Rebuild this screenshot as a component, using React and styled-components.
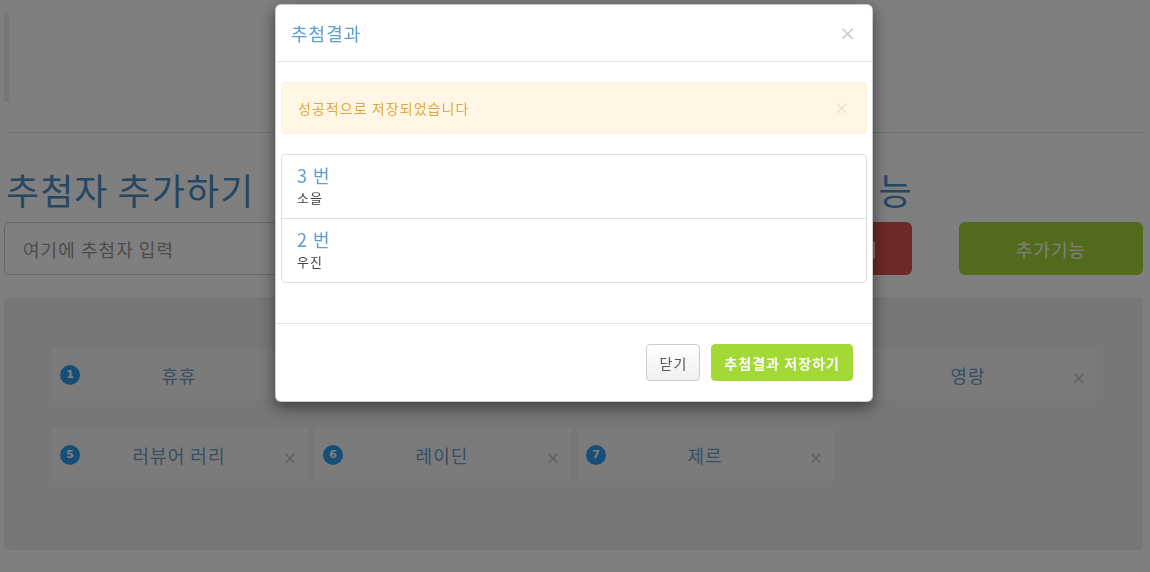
import React from "react";
import styled, { createGlobalStyle } from "styled-components";

const Global = createGlobalStyle`
  html, body { margin: 0; padding: 0; background: #fff; }
  body {
    font-family: "Noto Sans CJK KR", "Noto Sans", sans-serif;
    font-size: 14px;
    letter-spacing: 0.075em;
    color: #333;
    overflow: hidden;
  }
  * { box-sizing: border-box; }
  input, button { letter-spacing: inherit; }
`;

const Page = styled.div`
  padding: 0 7px 0 4px;
  height: 572px;
`;

const Quote = styled.div`
  margin-top: 13px;
  height: 89px;
  border-left: 5px solid #eee;
`;

const Rule = styled.hr`
  margin: 30px 0 0 4px;
  border: 0;
  border-top: 1px solid #e2e2e2;
`;

const Grid = styled.div`
  display: grid;
  grid-template-columns: 1fr 177px 184px;
  column-gap: 8px;
  margin-top: ${(p) => p.$top}px;
`;

const Heading = styled.h1`
  margin: 0 0 0 2px;
  font-size: 36px;
  line-height: 40px;
  font-weight: 400;
  color: #4a8fc6;
  white-space: nowrap;
`;

const Input = styled.input`
  height: 53px;
  border: 1px solid #ccc;
  border-radius: 6px;
  padding: 0 18px;
  font-family: inherit;
  font-size: 18px;
  color: #555;
  &::placeholder { color: #999; }
`;

const Btn = styled.button`
  height: 53px;
  width: ${(p) => p.$w || "100%"};
  border: 0;
  border-radius: 6px;
  background: ${(p) => p.$bg};
  color: #fff;
  font-family: inherit;
  font-size: 18px;
`;

const Panel = styled.div`
  margin-top: 22px;
  height: 253px;
  background: #efefef;
  border-radius: 5px;
  padding: 50px 46px 0 46px;
  display: grid;
  grid-template-columns: repeat(4, 259px);
  grid-auto-rows: 55px;
  column-gap: 4px;
  row-gap: 25px;
  align-content: start;
`;

const Card = styled.div`
  background: #f7f7f7;
  border: 1px solid #eaeaea;
  display: grid;
  grid-template-columns: 40px 1fr 40px;
  align-items: center;
  padding: 0 10px 0 9px;
`;

const Badge = styled.span`
  width: 20px;
  height: 20px;
  border-radius: 50%;
  background: #2a9ef0;
  color: #fff;
  font-family: "DejaVu Sans", sans-serif;
  letter-spacing: 0;
  font-weight: 700;
  font-size: 11px;
  display: flex;
  align-items: center;
  justify-content: center;
`;

const CardName = styled.span`
  text-align: center;
  font-size: 18px;
  line-height: 24px;
  color: #6e9cc8;
`;

const CardClose = styled.span`
  justify-self: end;
  margin-top: 8px;
  font-family: "DejaVu Sans", sans-serif;
  font-size: 17px;
  line-height: 1;
  color: #c4c4c4;
`;

const Backdrop = styled.div`
  position: fixed;
  inset: 0;
  background: rgba(0, 0, 0, 0.5);
`;

const Dialog = styled.div`
  position: fixed;
  top: 4px;
  left: 275px;
  width: 598px;
  background: #fff;
  border: 1px solid rgba(0, 0, 0, 0.2);
  border-radius: 6px;
  box-shadow: 0 5px 15px rgba(0, 0, 0, 0.5);
`;

const Header = styled.div`
  display: flex;
  align-items: center;
  justify-content: space-between;
  padding: 15px;
  border-bottom: 1px solid #e5e5e5;
`;

const Title = styled.h4`
  margin: 0;
  font-size: 18px;
  line-height: 26px;
  font-weight: 400;
  color: #5a9fd2;
`;

const Close = styled.span`
  font-family: "DejaVu Sans", sans-serif;
  letter-spacing: 0;
  font-size: ${(p) => p.$size || 18}px;
  line-height: 1;
  color: ${(p) => p.$color || "#cdcdcd"};
  margin-right: ${(p) => p.$mr || 0}px;
`;

const Body = styled.div`
  padding: 20px 5px;
`;

const Alert = styled.div`
  display: flex;
  align-items: center;
  justify-content: space-between;
  padding: 15px 16px;
  background: #fff6e5;
  border: 1px solid #fbefd6;
  border-radius: 4px;
  color: #dea73e;
  font-size: 14px;
  line-height: 20px;
  margin-bottom: 20px;
`;

const List = styled.div`
  border: 1px solid #ddd;
  border-radius: 4px;
  overflow: hidden;
  margin-bottom: 20px;
`;

const Item = styled.div`
  padding: 10px 15px;
  & + & { border-top: 1px solid #ddd; }
`;

const ItemHead = styled.div`
  font-size: 18px;
  line-height: 20px;
  color: #5a9fd2;
  margin-bottom: 3px;
`;

const ItemText = styled.div`
  font-size: 13px;
  line-height: 20px;
  color: #444;
`;

const Footer = styled.div`
  display: flex;
  justify-content: flex-end;
  gap: 11px;
  padding: 20px 19px 20px 20px;
  border-top: 1px solid #e5e5e5;
`;

const FootBtn = styled.button`
  height: 37px;
  padding: 0 12px;
  border-radius: 4px;
  font-family: inherit;
  font-size: 14px;
  border: 1px solid ${(p) => (p.$primary ? "#a3d937" : "#ccc")};
  background: ${(p) => (p.$primary ? "#a3d937" : "linear-gradient(#fff, #f0f0f0)")};
  color: ${(p) => (p.$primary ? "#fff" : "#555")};
  font-weight: ${(p) => (p.$primary ? 700 : 400)};
`;

const cards = [
  [1, "휴휴"],
  [2, "우진"],
  [3, "소을"],
  [4, "영랑"],
  [5, "러뷰어 러리"],
  [6, "레이딘"],
  [7, "제르"],
];

export default function App() {
  return (
    <>
      <Global />
      <Page>
        <Quote />
        <Rule />
        <Grid $top={36}>
          <Heading>추첨자 추가하기</Heading>
          <Heading>추첨기능</Heading>
        </Grid>
        <Grid $top={13}>
          <Input placeholder="여기에 추첨자 입력" />
          <Btn $bg="#d9534f" $w="138px">추첨하기</Btn>
          <Btn $bg="#a3d63b">추가기능</Btn>
        </Grid>
        <Panel>
          {cards.map(([n, name]) => (
            <Card key={n}>
              <Badge>{n}</Badge>
              <CardName>{name}</CardName>
              <CardClose>×</CardClose>
            </Card>
          ))}
        </Panel>
      </Page>
      <Backdrop />
      <Dialog>
        <Header>
          <Title>추첨결과</Title>
          <Close $size={20} $mr={1}>×</Close>
        </Header>
        <Body>
          <Alert>
            <span>성공적으로 저장되었습니다</span>
            <Close $color="#f0e2c8" $mr={1}>×</Close>
          </Alert>
          <List>
            <Item>
              <ItemHead>3 번</ItemHead>
              <ItemText>소을</ItemText>
            </Item>
            <Item>
              <ItemHead>2 번</ItemHead>
              <ItemText>우진</ItemText>
            </Item>
          </List>
        </Body>
        <Footer>
          <FootBtn>닫기</FootBtn>
          <FootBtn $primary>추첨결과 저장하기</FootBtn>
        </Footer>
      </Dialog>
    </>
  );
}
